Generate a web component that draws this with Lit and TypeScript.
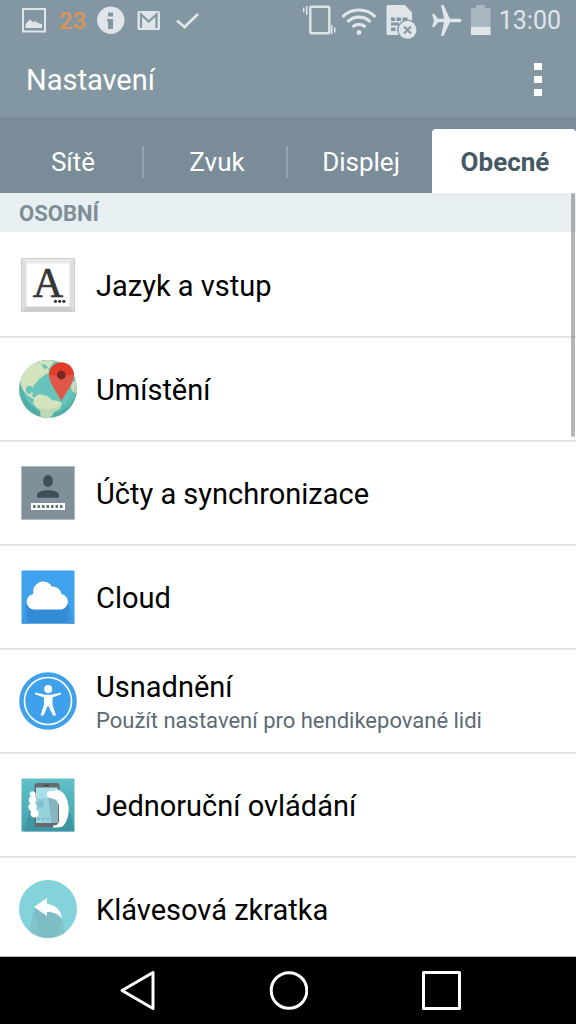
import { LitElement, html, svg, css, nothing, TemplateResult } from "lit";
import { customElement, property, state } from "lit/decorators.js";
import { classMap } from "lit/directives/class-map.js";

interface Entry {
  title: string;
  note?: string;
  icon: TemplateResult;
}

const keyboardIcon = svg`
  <rect x="2.5" y="2.5" width="53" height="53" fill="#e9e9e9" stroke="#cfcfcf"/>
  <path d="M3 55l5-5h42l5 5z" fill="#cdcdcd"/>
  <path d="M3 3l5 5v42l-5 5zM55 3l-5 5v42l5 5z" fill="#dedede"/>
  <rect x="7.5" y="7.5" width="43" height="43" fill="#fff"/>
  <text x="29" y="40.500" text-anchor="middle" font-family="Liberation Serif, serif" font-size="42" fill="#353535" stroke="#353535" stroke-width=".7">A</text>
  <circle cx="36.500" cy="45.300" r="1.600" fill="#353535"/>
  <circle cx="40.700" cy="45.300" r="1.600" fill="#353535"/>
  <circle cx="44.900" cy="45.300" r="1.600" fill="#353535"/>`;

const globeIcon = svg`
  <defs><clipPath id="globe"><circle cx="29" cy="29" r="29"/></clipPath></defs>
  <g clip-path="url(#globe)">
    <rect width="58" height="58" fill="#57b4ac"/>
    <circle cx="31" cy="26" r="27" fill="#68c3ba"/>
    <path fill="#d3e3bd" d="M4 14L10 6l8-4 5 3 2 4 4-1 1 5-3 1-4 3-3 2-2 3-3 3-1 3-2-2-3 0-2 2 0 3 1 2 3 1 2-2 1 1-1 3 3 2-1 1-4-2-4-3-3-4-2-5-1-5z"/>
    <path fill="#d3e3bd" d="M18 5l3-4 8-1 7 1-3 3-3 5-3-4-4-1zM58 20l-4 2-2 4 1 5 3 2 2-1z"/>
    <path fill="#d3e3bd" d="M15.500 37l5-3 8 2 4.500 4 6 1 4 2-2 6-6 3-2 4-4 3h-7l-1-8-4-4-3-4z"/>
    <path d="M55 22C55 40 43 49 28 49 16 49 8 43 4 35l2 14 18 10 25-5 10-23z" fill="#2a8c80" opacity=".13"/>
  </g>
  <path d="M42.500 2.500A12.500 12.500 0 0 0 30 15c0 8 8 17 12.500 26C47 32 55 23 55 15A12.500 12.500 0 0 0 42.500 2.500z" fill="#e15747"/>
  <path d="M42.500 2.500A12.500 12.500 0 0 0 30 15h25A12.500 12.500 0 0 0 42.500 2.500z" fill="#e13d28"/>
  <circle cx="42.300" cy="15" r="4.400" fill="#742824"/>`;

const accountIcon = svg`
  <rect x="2.500" y="2.500" width="53" height="53" fill="#80909a" stroke="#a4afb5" stroke-width=".5"/>
  <ellipse cx="29" cy="17" rx="5" ry="6" fill="#3f4f59"/>
  <path d="M18 33.700v-3c0-6 22-6 22 0v3z" fill="#3f4f59"/>
  <rect x="12" y="39" width="34" height="7" fill="#fff"/>
  <path d="M14 42.500h30" stroke="#65757f" stroke-width="3" stroke-dasharray="2.600 1.900"/>`;

const cloudIcon = svg`
  <rect x="2.500" y="2.500" width="53" height="53" fill="#3ea2ed"/>
  <path d="M7 37L3 55.500h52.500L50 37z" fill="#328bd4"/>
  <path d="M7 38L3 55.500h6zM50 38l5.500 17.500H48z" fill="#3d98df"/>
  <path d="M15 41.500a7.800 7.800 0 0 1-.7-15.500A10.200 10.200 0 0 1 33 18.500c5 0 9 3 9.500 7.500a7.900 7.900 0 0 1 0 15.500z" fill="#fff"/>`;

const accessIcon = svg`
  <circle cx="29" cy="29" r="28.800" fill="#3fa0eb"/>
  <circle cx="29" cy="29" r="23.500" fill="none" stroke="#fff" stroke-width="1.600"/>
  <circle cx="29.200" cy="17" r="4" fill="#fff"/>
  <path d="M16 20.500l10 2.300h6.500l9.500-2.300v1.700l-8.500 3.300v7l3.500 11h-3l-4.500-9.500h-.8L24.500 43.500h-3L25 32.500v-7l-9-3.300z" fill="#fff"/>`;

const handIcon = svg`
  <defs>
    <linearGradient id="teal" x2="0" y2="1"><stop stop-color="#60c1c7"/><stop offset="1" stop-color="#41a0ad"/></linearGradient>
    <clipPath id="tile"><rect x="2.500" y="2.500" width="53" height="53"/></clipPath>
  </defs>
  <rect x="2.500" y="2.500" width="53" height="53" fill="url(#teal)"/>
  <g clip-path="url(#tile)">
    <path d="M10 36L5 56h51l-6-22z" fill="#3c8c99" opacity=".6"/>
    <rect x="15.500" y="7" width="25" height="44" rx="2.500" fill="#66696d"/>
    <rect x="17" y="11.500" width="21.500" height="35.500" fill="#a8e0e8"/>
    <path d="M17 22h21.500v25H17z" fill="#97d2dd"/>
    <path d="M29 20l9.500 4v23h-6z" fill="#84b5c0"/>
    <circle cx="21.500" cy="28" r="3.500" fill="#7cc0d0"/>
    <path d="M18.500 43h17" stroke="#7cbccb" stroke-width="2.500" stroke-dasharray="2.500 2"/>
    <rect x="24.500" y="9" width="5.500" height="1" fill="#303235"/>
    <path d="M28 17c1-2 4-2 6.500-2 1.500 0 2-1.500 4-1.500 4 1.500 7 4 8.500 8 2 4 2.700 8 2.700 13-.2 6-2 11-5 15-2 2-6 2-10.700 2l0-2c4 0 6-2 6-5V31c0-4-2-7-5-8-3-.6-6-1-7-3z" fill="#fff"/>
    <g fill="#fff"><circle cx="13.500" cy="18" r="2.800"/><circle cx="13.500" cy="24" r="3.800"/><circle cx="13.500" cy="31" r="4.200"/><circle cx="15.500" cy="37.500" r="4"/><path d="M13 17h3.500v22H14z"/></g>
  </g>`;

const backKeyIcon = svg`
  <defs><clipPath id="disc"><circle cx="29" cy="29" r="29"/></clipPath></defs>
  <circle cx="29" cy="29" r="29" fill="#82d4da"/>
  <g clip-path="url(#disc)">
    <path d="M15.500 28L9 58h37l-3-19-14-10z" fill="#7dbbc5"/>
    <path d="M15.500 28L9 58h11zM43 38l-6 20h11z" fill="#81c5cc"/>
  </g>
  <path d="M15 27L28 18v6c8 .5 14.500 6 15 15-4-5.500-9-7-15-7v4z" fill="#fff"/>`;

const entries: Entry[] = [
  { title: "Jazyk a vstup", icon: keyboardIcon },
  { title: "Umístění", icon: globeIcon },
  { title: "Účty a synchronizace", icon: accountIcon },
  { title: "Cloud", icon: cloudIcon },
  { title: "Usnadnění", note: "Použít nastavení pro hendikepované lidi", icon: accessIcon },
  { title: "Jednoruční ovládání", icon: handIcon },
  { title: "Klávesová zkratka", icon: backKeyIcon },
];

@customElement("status-bar")
class StatusBar extends LitElement {
  static styles = css`
    :host {
      display: flex;
      align-items: center;
      height: 42px;
      padding: 0 15px 0 20px;
      color: #dfe5e9;
      font-size: 25px;
      line-height: 42px;
    }
    svg { display: block; fill: currentColor; }
    .group { display: flex; align-items: center; }
    .left { gap: 11px; }
    .right { margin-left: auto; }
    .date { color: #dc9356; font-size: 24px; font-weight: 500; }
  `;

  render() {
    return html`
      <div class="group left">
        <svg width="28" height="42" viewBox="20 0 28 42" aria-hidden="true">
          <path d="M22 8h24v24.500H22zM24 10v20.500h20V10z" fill-rule="evenodd"/>
          <path d="M25.500 28v-4l4.500-4.500 3 3 2-1.500 3 2 4 1v4z"/>
        </svg>
        <span class="date">23</span>
        <svg width="28" height="42" viewBox="97 0 28 42" aria-hidden="true">
          <path fill-rule="evenodd" d="M110.800 6.500a13.700 13.700 0 1 0 .01 0zM108 12.500h5v4h-5zm-1 6.500h6v10h-5v-7.500h-1z"/>
        </svg>
        <svg width="25" height="42" viewBox="136 0 25 42" aria-hidden="true">
          <rect x="137.500" y="11" width="22.500" height="19" rx="1.500"/>
          <path d="M141 28V14.500l7.800 7 7.700-7V28" fill="none" stroke="#8297a2" stroke-width="2.200"/>
        </svg>
        <svg width="28" height="42" viewBox="172 0 28 42" aria-hidden="true">
          <path d="M177 20.500l7.500 6.500L198 14" fill="none" stroke="currentColor" stroke-width="2.800"/>
        </svg>
      </div>
      <div class="group right">
        <svg width="38" height="42" viewBox="303 0 38 42" aria-hidden="true">
          <rect x="310.300" y="6.800" width="19" height="26.400" rx="1" fill="none" stroke="currentColor" stroke-width="2.400"/>
          <path d="M303 7.500h1.500v5H303zM306 6h1.500v9H306zM331 25h1.500v9H331zM334 27.500h1.500v5H334z"/>
        </svg>
        <svg width="42" height="42" viewBox="341 0 42 42" aria-hidden="true">
          <g fill="none" stroke="currentColor" stroke-width="3.200">
            <path d="M342.500 17a23 23 0 0 1 33 0"/><path d="M347.500 22a16 16 0 0 1 23 0"/><path d="M352.500 27a9.500 9.500 0 0 1 13 0"/>
          </g>
          <circle cx="359" cy="32.500" r="2.400"/>
        </svg>
        <svg width="48" height="42" viewBox="383 0 48 42" aria-hidden="true">
          <path fill-rule="evenodd" d="M388 5h17l7 7.500V35h-24q-1.500 0-1.500-1.500v-27q0-1.500 1.500-1.500zM391 17.500v3.500h4v-3.500zm5.500 0v3.500h4.500v-3.500zm6 0v3.500h5v-3.500zM391 22.500v3h8v-3zm0 5v3.500h4.500v-3.500zm6 0v3.500h4v-3.500z"/>
          <circle cx="407.500" cy="29.800" r="10.200" fill="#8297a2"/>
          <circle cx="407.500" cy="29.800" r="9"/>
          <path d="M404 26.500l7 7m0-7l-7 7" stroke="#8297a2" stroke-width="2"/>
        </svg>
        <svg width="39" height="42" viewBox="431 0 39 42" aria-hidden="true">
          <path d="M441 5h2.500l6.500 13.800h9.500q2 0 2 1.700t-2 1.700H450L443.500 36H441l3-13.800h-6L434.500 27H432l2-6.500-2-6.500h2.500l3.500 4.800h6z"/>
        </svg>
        <svg width="29" height="42" viewBox="470 0 29 42" aria-hidden="true">
          <path d="M471 8h5V5h9v3h5.500v27H471z" opacity=".42"/><path d="M471 27h19.500v8H471z"/>
        </svg>
        <span>13:00</span>
      </div>
    `;
  }
}

@customElement("settings-row")
class SettingsRow extends LitElement {
  @property({ attribute: false }) entry!: Entry;

  static styles = css`
    :host { display: block; }
    .row {
      box-sizing: border-box;
      display: flex;
      align-items: center;
      gap: 19px;
      min-height: 104px;
      padding: 0 19px;
      border-top: 2px solid var(--line, #e2e4e5);
      color: #000;
      text-decoration: none;
    }
    .icon { flex: none; width: 58px; height: 58px; }
    .words { display: grid; gap: 2px; padding-top: 2px; }
    .title { font-size: 29px; line-height: 36px; }
    .note { font-size: 22px; line-height: 28px; color: #5c6b73; }
  `;

  render() {
    const { title, note, icon } = this.entry;
    return html`
      <a class="row" href="#">
        <svg class="icon" viewBox="0 0 58 58" aria-hidden="true">${icon}</svg>
        <span class="words">
          <span class="title">${title}</span>
          ${note ? html`<span class="note">${note}</span>` : nothing}
        </span>
      </a>
    `;
  }
}

@customElement("app-root")
class AppRoot extends LitElement {
  @state() private active = 3;

  static styles = css`
    :host {
      display: flex;
      flex-direction: column;
      height: 100vh;
      overflow: hidden;
      background: #fff;
      font-family: Roboto, "Noto Sans", sans-serif;
    }
    button { border: 0; padding: 0; margin: 0; background: none; font: inherit; color: inherit; }
    .top { flex: none; background: #8297a2; color: #fff; }
    .bar {
      display: flex;
      align-items: center;
      justify-content: space-between;
      height: 75px;
      padding: 0 26px;
    }
    .heading { margin: 0; font-size: 29px; font-weight: 400; line-height: 36px; }
    .more { display: grid; place-items: center; width: 24px; height: 48px; }
    .more svg { display: block; }
    .tabs {
      display: grid;
      grid-template-columns: repeat(4, 1fr);
      padding-top: 12px;
      background: #7a8c97;
    }
    .tab {
      box-sizing: border-box;
      display: flex;
      align-items: center;
      height: 64px;
      padding-top: 2px;
      font-size: 26px;
    }
    .label { flex: 1; padding-left: 4px; line-height: 32px; border-right: 2px solid transparent; }
    .divided .label { border-color: #95a4ad; }
    .selected { background: #fff; color: #455863; font-weight: 700; border-radius: 4px 4px 0 0; }
    .content { position: relative; flex: 1; min-height: 0; overflow: hidden; }
    .section {
      margin: 0;
      padding: 2px 19px 0;
      background: #e7eff2;
      color: #808d94;
      font-size: 22px;
      font-weight: 700;
      line-height: 37px;
    }
    .first { --line: transparent; }
    .thumb {
      position: absolute;
      top: 0;
      right: 1px;
      width: 4px;
      height: 32%;
      border-radius: 2px;
      background: rgba(90, 94, 98, 0.45);
    }
    .nav {
      flex: none;
      display: flex;
      justify-content: center;
      gap: 113px;
      background: #000;
      border-top: 1px solid #b7bcbe;
    }
    .nav button { width: 40px; height: 67px; }
    .nav svg { display: block; fill: none; stroke: #fff; stroke-width: 3; stroke-linejoin: round; }
  `;

  render() {
    const tabs = ["Sítě", "Zvuk", "Displej", "Obecné"];
    return html`
      <header class="top">
        <status-bar></status-bar>
        <div class="bar">
          <h1 class="heading">Nastavení</h1>
          <button class="more" aria-label="Další možnosti">
            <svg width="8" height="34" viewBox="0 0 8 34" fill="#fff">
              <path d="M0 0h8v7H0zM0 13h8v7H0zM0 26h8v7H0z"/>
            </svg>
          </button>
        </div>
        <div class="tabs" role="tablist">
          ${tabs.map((name, i) => html`
            <button
              role="tab"
              aria-selected=${i === this.active ? "true" : "false"}
              class=${classMap({
                tab: true,
                selected: i === this.active,
                divided: i !== this.active && i + 1 !== this.active && i < tabs.length - 1,
              })}
              @click=${() => (this.active = i)}
            ><span class="label">${name}</span></button>
          `)}
        </div>
      </header>
      <main class="content">
        <h2 class="section">OSOBNÍ</h2>
        ${entries.map((entry, i) => html`
          <settings-row class=${classMap({ first: i === 0 })} .entry=${entry}></settings-row>
        `)}
        <div class="thumb"></div>
      </main>
      <nav class="nav">
        <button aria-label="Zpět">
          <svg width="40" height="67" viewBox="0 0 40 67"><path d="M38 15.500v36L7 33.500z"/></svg>
        </button>
        <button aria-label="Domů">
          <svg width="40" height="67" viewBox="0 0 40 67"><circle cx="21" cy="33.500" r="17.800"/></svg>
        </button>
        <button aria-label="Poslední aplikace">
          <svg width="40" height="67" viewBox="0 0 40 67"><path d="M2.500 15.500h36v36h-36z"/></svg>
        </button>
      </nav>
    `;
  }
}
